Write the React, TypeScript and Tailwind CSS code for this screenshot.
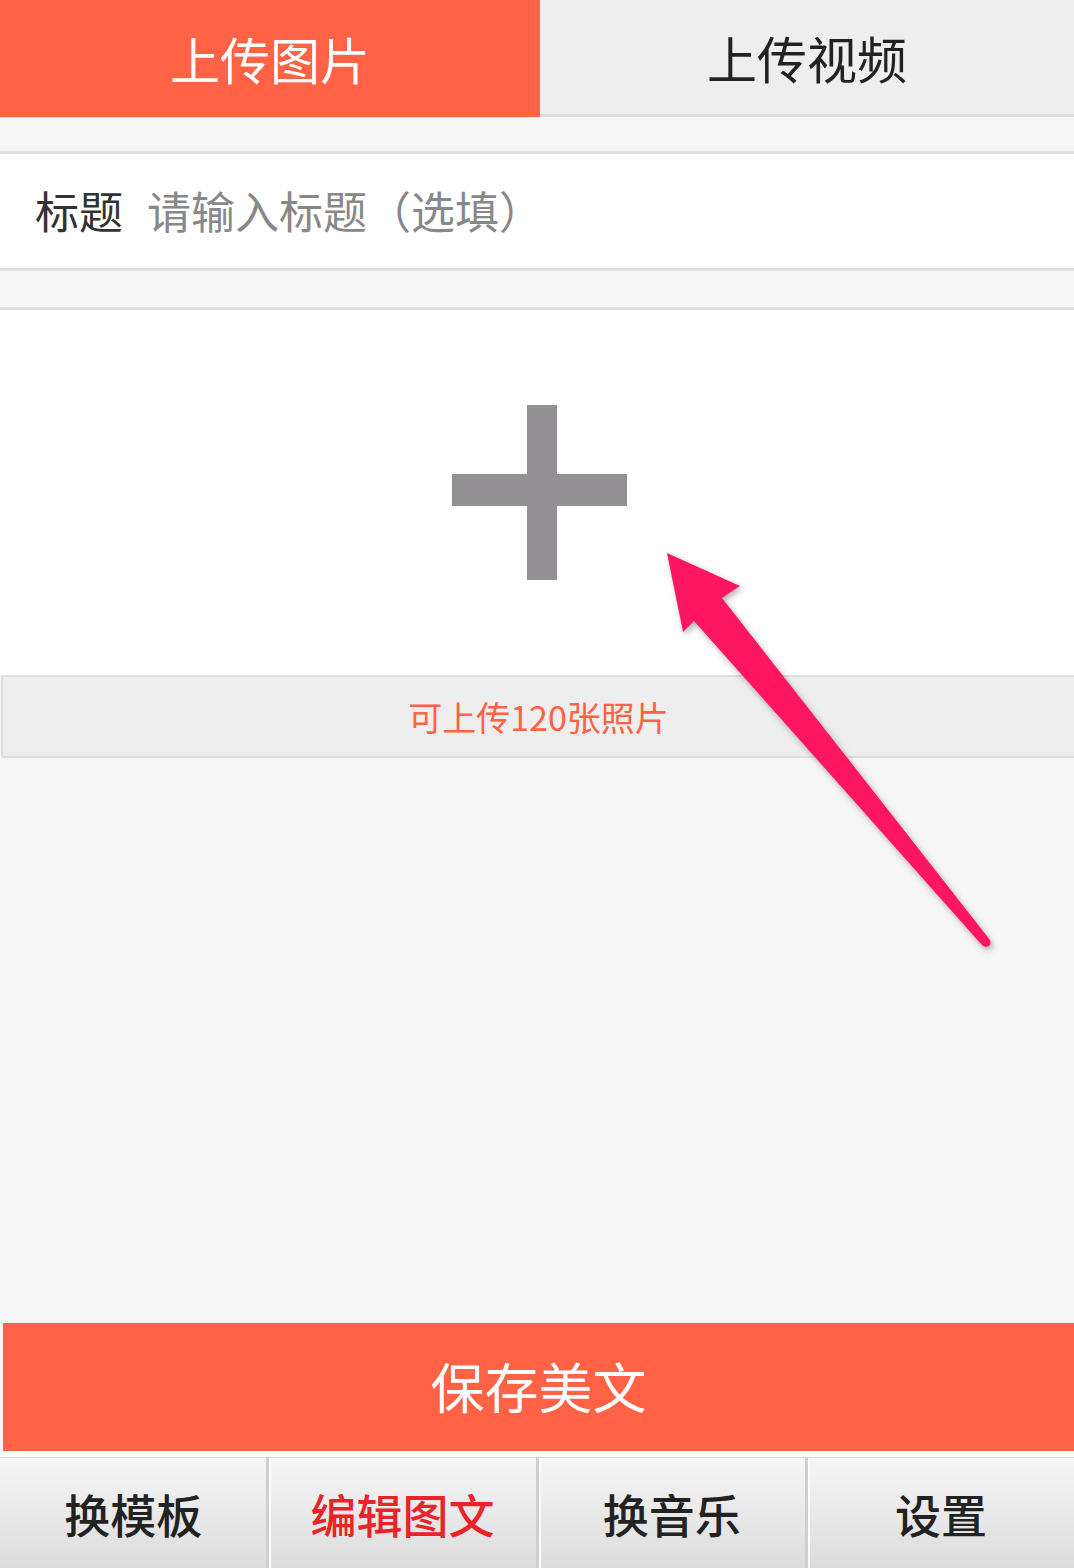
import React from "react";

const FONT = "font-['Noto_Sans_CJK_SC','Noto_Sans',sans-serif]";

function Plus() {
  return (
    <svg width="176" height="176" viewBox="0 0 176 176" className="ml-[6px]">
      <rect x="75" y="0" width="30" height="175" fill="#929092" />
      <rect x="0" y="69" width="175" height="32" fill="#929092" />
    </svg>
  );
}

function Arrow() {
  return (
    <svg
      className="absolute left-0 top-0 pointer-events-none"
      width="1074"
      height="1568"
      viewBox="0 0 1074 1568"
    >
      <defs>
        <filter id="sh" x="-20%" y="-20%" width="140%" height="140%">
          <feDropShadow dx="2" dy="3" stdDeviation="3" floodColor="#000" floodOpacity="0.3" />
        </filter>
      </defs>
      <path
        d="M667 553 L740 586 L722 598 L990 940 Q992 946 986 947 Q983 947 981 944 L694 621 L683 632 Z"
        fill="#ff1463"
        filter="url(#sh)"
      />
    </svg>
  );
}

export default function App() {
  const tabs = [
    { t: "换模板", c: "text-[#222222]" },
    { t: "编辑图文", c: "text-[#e8232a]" },
    { t: "换音乐", c: "text-[#222222]" },
    { t: "设置", c: "text-[#222222]" },
  ];
  return (
    <div className={`relative w-[1074px] h-[1568px] flex flex-col bg-[#f6f6f6] overflow-hidden ${FONT}`}>
      {/* top tabs */}
      <div className="flex h-[117px]">
        <div className="w-[540px] bg-[#ff6244] flex items-center justify-center text-white text-[50px] leading-none pb-[2px]">
          上传图片
        </div>
        <div className="flex-1 bg-[#eeeeee] border-b-[3px] border-[#dcdcdc] flex items-center justify-center text-[#222222] text-[50px] leading-none">
          上传视频
        </div>
      </div>
      <div className="h-[34px]" />
      {/* title row */}
      <div className="h-[120px] bg-white border-y-[3px] border-[#e0e0e0] flex items-center pl-[35px] text-[44px] leading-none pb-[2px]">
        <span className="text-[#333333]">标题</span>
        <span className="ml-[24px] text-[#888888]">请输入标题（选填）</span>
      </div>
      <div className="h-[36px]" />
      {/* upload area */}
      <div className="h-[368px] bg-white border-t-[3px] border-[#e0e0e0] flex items-center justify-center">
        <Plus />
      </div>
      {/* notice */}
      <div className="h-[83px] ml-[1px] bg-[#eeeeee] border-t-2 border-l-2 border-b-2 border-[#dedede] rounded-bl-[3px] flex items-center justify-center text-[#ff6244] text-[34px] leading-none">
        可上传120张照片
      </div>
      <div className="flex-1" />
      {/* save button */}
      <div className="h-[128px] ml-[3px] bg-[#ff6244] flex items-center justify-center text-white text-[54px] leading-none pb-[2px]">
        保存美文
      </div>
      <div className="h-[6px] bg-white" />
      {/* bottom nav */}
      <div className="h-[111px] flex bg-gradient-to-b from-[#f6f6f6] to-[#dcdcdc] border-t border-[#d6d6d6]">
        {tabs.map((x, i) => (
          <div
            key={x.t}
            className={`flex-1 flex items-center justify-center text-[46px] font-medium leading-none ${x.c} ${
              i > 0 ? "border-l-[3px] border-l-[#cfcfcf] shadow-[inset_2px_0_0_#ffffff]" : ""
            }`}
          >
            {x.t}
          </div>
        ))}
      </div>
      <Arrow />
    </div>
  );
}
